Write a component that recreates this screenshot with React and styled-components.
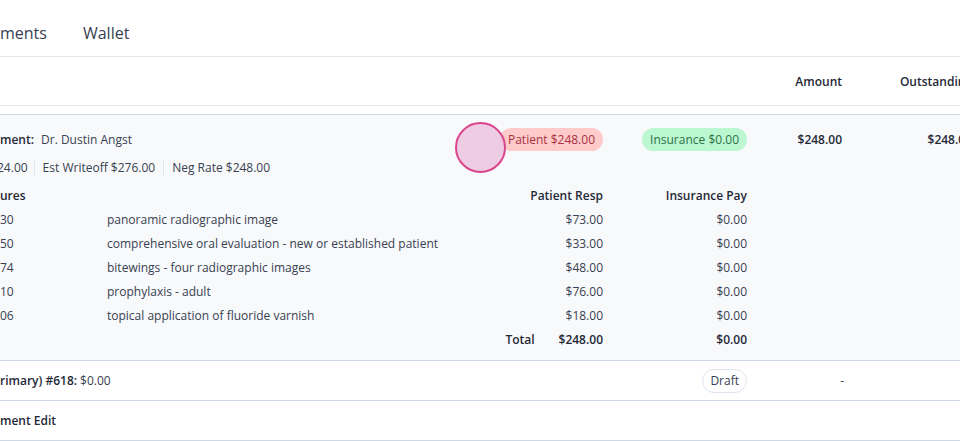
import React from "react";
import styled, { createGlobalStyle } from "styled-components";

const GlobalStyle = createGlobalStyle`
  html, body {
    margin: 0;
    padding: 0;
    background: #fff;
    overflow: hidden;
  }
  body {
    font-family: "Open Sans", "Noto Sans", sans-serif;
    font-size: 12px;
    color: #374151;
  }
`;

const Page = styled.div`
  position: relative;
  width: 990px;
  height: 441px;
`;

const Tabs = styled.nav`
  display: flex;
  gap: 36px;
  align-items: center;
  height: 47px;
  padding-top: 9px;
  border-bottom: 1px solid #e5e7eb;
  font-size: 16px;
  color: #374151;
`;

const Tab = styled.span`
  white-space: nowrap;
`;

const Row = styled.div`
  display: grid;
  grid-template-columns: 1fr 144px 95px 130px;
  align-items: center;
  padding-right: 18px;
  height: ${({ h }) => h || 24}px;
  border-bottom: ${({ line }) => (line ? `1px solid ${line}` : "none")};
  margin-bottom: ${({ mb }) => mb || 0}px;
`;

const Cell = styled.div`
  display: flex;
  align-items: center;
  justify-content: ${({ right }) => (right ? "flex-end" : "flex-start")};
  font-weight: ${({ bold }) => (bold ? 600 : 400)};
  color: ${({ bold }) => (bold ? "#1f2937" : "#374151")};
  white-space: nowrap;
`;

const Dash = styled.span`
  margin-right: -2px;
`;

const Spacer = styled.div`
  height: 8px;
`;

const Panel = styled.section`
  background: #f8f9fb;
  border-top: 1px solid #cdd7e4;
  border-bottom: 1px solid #cdd7e4;
  padding: 12px 0 9px;
`;

const Label = styled.span`
  font-weight: 600;
  color: #1f2937;
  margin-right: ${({ gap }) => (gap === undefined ? 7 : gap)}px;
`;

const Badges = styled.div`
  margin-left: auto;
  display: flex;
`;

const Stats = styled.div`
  display: flex;
  align-items: center;
  height: 24px;
  padding-top: 1px;
  margin-left: -3px;
`;

const Stat = styled.span`
  padding: 0 8px;
  border-left: 1px solid #e3e6ea;
  line-height: 16px;

  &:first-child {
    padding-left: 0;
    border-left: none;
    padding-right: 6px;
  }
`;

const Pill = styled.span`
  display: inline-flex;
  align-items: center;
  height: 23px;
  padding: 0 8px;
  border-radius: 12px;
  font-size: 12px;
  background: ${({ tone }) => (tone === "red" ? "#fecaca" : "#bbf7d0")};
  color: ${({ tone }) => (tone === "red" ? "#a8333c" : "#2f7349")};
`;

const Outline = styled.span`
  display: inline-flex;
  align-items: center;
  height: 22px;
  padding: 0 7px;
  border-radius: 12px;
  border: 1px solid #dfe5ee;
  background: #fff;
  color: #374151;
`;

const Lines = styled.div`
  display: grid;
  grid-template-columns: 107px 396px 100px 144px 225px;
  grid-auto-rows: 24px;
  align-items: center;
  padding-right: 18px;
`;

const Item = styled.div`
  white-space: nowrap;
  text-align: ${({ right }) => (right ? "right" : "left")};
  font-weight: ${({ bold }) => (bold ? 600 : 400)};
  color: ${({ bold }) => (bold ? "#1f2937" : "#374151")};
  grid-column: ${({ col }) => col || "auto"};
`;

const TotalCell = styled(Item)`
  display: flex;
  justify-content: flex-end;
  gap: 24px;
`;

const Touch = styled.div`
  position: absolute;
  left: 455px;
  top: 122px;
  width: 47px;
  height: 47px;
  border-radius: 50%;
  background: rgba(236, 196, 222, 0.85);
  border: 2px solid #d9468d;
`;

const lines = [
  ["30", "panoramic radiographic image", "$73.00", "$0.00"],
  ["50", "comprehensive oral evaluation - new or established patient", "$33.00", "$0.00"],
  ["74", "bitewings - four radiographic images", "$48.00", "$0.00"],
  ["10", "prophylaxis - adult", "$76.00", "$0.00"],
  ["06", "topical application of fluoride varnish", "$18.00", "$0.00"],
];

export default function App() {
  return (
    <Page>
      <GlobalStyle />
      <Tabs>
        <Tab>ments</Tab>
        <Tab>Wallet</Tab>
      </Tabs>

      <Row h={48} line="#e5e7eb">
        <Cell />
        <Cell />
        <Cell right bold>Amount</Cell>
        <Cell right bold>Outstanding</Cell>
      </Row>

      <Spacer />

      <Panel>
        <Row mb={4}>
          <Cell>
            <Label>ment:</Label>
            Dr. Dustin Angst
            <Badges>
              <Pill tone="red">Patient $248.00</Pill>
            </Badges>
          </Cell>
          <Cell right>
            <Pill tone="green">Insurance $0.00</Pill>
          </Cell>
          <Cell right bold>$248.00</Cell>
          <Cell right bold>$248.00</Cell>
        </Row>

        <Row mb={4}>
          <Stats>
            <Stat>24.00</Stat>
            <Stat>Est Writeoff $276.00</Stat>
            <Stat>Neg Rate $248.00</Stat>
          </Stats>
        </Row>

        <Lines>
          <Item bold col="1 / 3">ures</Item>
          <Item bold right col="3">Patient Resp</Item>
          <Item bold right col="4">Insurance Pay</Item>
          {lines.map(([code, desc, pat, ins]) => (
            <React.Fragment key={code}>
              <Item col="1">{code}</Item>
              <Item col="2">{desc}</Item>
              <Item right col="3">{pat}</Item>
              <Item right col="4">{ins}</Item>
            </React.Fragment>
          ))}
          <TotalCell bold col="3">
            <span>Total</span>
            <span>$248.00</span>
          </TotalCell>
          <Item bold right col="4">$0.00</Item>
        </Lines>
      </Panel>

      <Row h={39} line="#cdd7e4">
        <Cell>
          <Label gap={3}>rimary) #618:</Label>
          $0.00
        </Cell>
        <Cell right>
          <Outline>Draft</Outline>
        </Cell>
        <Cell right>
          <Dash>-</Dash>
        </Cell>
        <Cell />
      </Row>

      <Row h={39} line="#cdd7e4">
        <Cell bold>ment Edit</Cell>
      </Row>

      <Touch />
    </Page>
  );
}
